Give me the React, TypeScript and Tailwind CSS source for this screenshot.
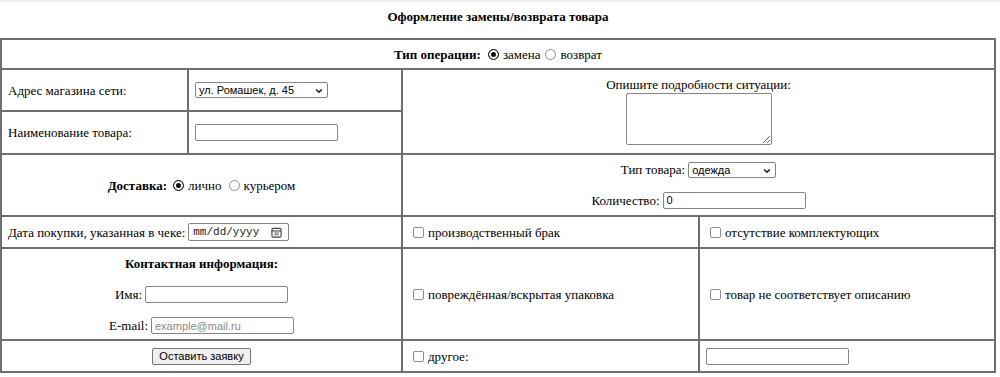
import type { ReactNode } from "react";

const serif = "font-['Liberation_Serif','Times_New_Roman',serif]";
const sans = "font-['Liberation_Sans',Arial,sans-serif]";

function Radio({ checked = false, name }: { checked?: boolean; name: string }) {
  return (
    <input
      type="radio"
      name={name}
      defaultChecked={checked}
      className="appearance-none w-[11px] h-[11px] rounded-full border border-[#8d8d8d] bg-white checked:border-[#1a1a1a] checked:bg-[#111] checked:shadow-[inset_0_0_0_2px_white] shrink-0"
    />
  );
}

function Check() {
  return (
    <input
      type="checkbox"
      className="appearance-none w-[11px] h-[11px] rounded-[2px] border border-[#8d8d8d] bg-white shrink-0"
    />
  );
}

function Select({ value, options, width }: { value: string; options: string[]; width: string }) {
  return (
    <div className={`relative ${width}`}>
      <select
        defaultValue={value}
        className={`appearance-none w-full h-[16px] pl-[3px] pr-[16px] border border-[#858585] rounded-[2px] bg-white text-[11px] leading-[14px] text-black ${sans}`}
      >
        {options.map((o) => (
          <option key={o}>{o}</option>
        ))}
      </select>
      <svg
        viewBox="0 0 10 10"
        className="absolute right-[5px] top-[5px] w-[8px] h-[8px] pointer-events-none"
      >
        <path d="M1.5 3 L5 6.5 L8.5 3" fill="none" stroke="#111" strokeWidth="1.8" />
      </svg>
    </div>
  );
}

function TextInput({ width, placeholder, value }: { width: string; placeholder?: string; value?: string }) {
  return (
    <input
      type="text"
      placeholder={placeholder}
      defaultValue={value}
      className={`${width} h-[17px] px-[3px] border border-[#858585] rounded-[2px] bg-white text-[11px] text-black placeholder:text-[#8a8a8a] ${sans}`}
    />
  );
}

function Cell({ className = "", children }: { className?: string; children?: ReactNode }) {
  return <div className={`bg-white ${className}`}>{children}</div>;
}

function CheckCell({ label }: { label: string }) {
  return (
    <Cell className="flex items-center pl-[10px] gap-[4px]">
      <Check />
      <span>{label}</span>
    </Cell>
  );
}

export default function App() {
  return (
    <div className={`w-[1000px] h-[377px] bg-white text-black text-[13px] leading-[15px] ${serif}`}>
      <div className="h-[2px] bg-[#efefef]" />
      <h3 className="w-[996px] text-center font-bold pt-[7px] h-[36px]">
        Оформление замены/возврата товара
      </h3>

      <div className="w-[996px] grid grid-cols-[185px_212px_295px_294px] grid-rows-[28px_40px_41px_60px_30px_90px_30px] gap-[2px] p-[2px] bg-[#6f6f6f]">
        {/* operation type */}
        <Cell className="col-span-4 flex items-center justify-center">
          <b>Тип операции:</b>
          <span className="ml-[7px] flex"><Radio name="op" checked /></span>
          <span className="ml-[4px]">замена</span>
          <span className="ml-[4px] flex"><Radio name="op" /></span>
          <span className="ml-[5px]">возврат</span>
        </Cell>

        <Cell className="flex items-center pl-[6px]">Адрес магазина сети:</Cell>
        <Cell className="flex items-center pl-[6px]">
          <Select value="ул. Ромашек, д. 45" options={["ул. Ромашек, д. 45", "пр. Мира, д. 12"]} width="w-[133px]" />
        </Cell>
        <Cell className="col-span-2 row-span-2 flex flex-col items-center justify-center pb-[2px]">
          <span>Опишите подробности ситуации:</span>
          <textarea className="mt-[1px] w-[146px] h-[52px] border border-[#858585] rounded-[2px] bg-white resize" />
        </Cell>

        <Cell className="flex items-center pl-[6px]">Наименование товара:</Cell>
        <Cell className="flex items-center pl-[6px]">
          <TextInput width="w-[143px]" />
        </Cell>

        {/* delivery */}
        <Cell className="col-span-2 flex items-center justify-center">
          <b>Доставка:</b>
          <span className="ml-[6px] flex"><Radio name="dl" checked /></span>
          <span className="ml-[4px]">лично</span>
          <span className="ml-[7px] flex"><Radio name="dl" /></span>
          <span className="ml-[4px]">курьером</span>
        </Cell>
        <Cell className="col-span-2 flex flex-col items-center justify-center gap-[14px]">
          <div className="flex items-center gap-[3px]">
            <span>Тип товара:</span>
            <Select value="одежда" options={["одежда", "обувь", "техника"]} width="w-[88px]" />
          </div>
          <div className="flex items-center gap-[3px]">
            <span>Количество:</span>
            <TextInput width="w-[143px]" value="0" />
          </div>
        </Cell>

        {/* purchase date */}
        <Cell className="col-span-2 flex items-center pl-[6px] gap-[3px]">
          <span>Дата покупки, указанная в чеке:</span>
          <div className="relative w-[101px] h-[18px] border border-[#858585] rounded-[2px] bg-white flex items-center pl-[4px] text-[11px] font-['Liberation_Mono','Courier_New',monospace] text-[#222]">
            mm/dd/yyyy
            <svg viewBox="0 0 12 12" className="absolute right-[6px] top-[3px] w-[11px] h-[11px]">
              <rect x="1" y="1.5" width="10" height="9.5" rx="1.5" fill="none" stroke="#444" strokeWidth="1.2" />
              <path d="M1 4.3 H11" stroke="#444" strokeWidth="1.2" />
              <path d="M3.5 6.5 H8.5 M3.5 8.5 H8.5" stroke="#444" strokeWidth="0.9" />
            </svg>
          </div>
        </Cell>
        <CheckCell label="производственный брак" />
        <CheckCell label="отсутствие комплектующих" />

        {/* contacts */}
        <Cell className="col-span-2 flex flex-col items-center pt-[7px]">
          <b>Контактная информация:</b>
          <div className="mt-[15px] flex items-center gap-[3px]">
            <span>Имя:</span>
            <TextInput width="w-[143px]" />
          </div>
          <div className="mt-[14px] flex items-center gap-[3px]">
            <span>E-mail:</span>
            <TextInput width="w-[143px]" placeholder="example@mail.ru" />
          </div>
        </Cell>
        <CheckCell label="повреждённая/вскрытая упаковка" />
        <CheckCell label="товар не соответствует описанию" />

        {/* submit */}
        <Cell className="col-span-2 flex items-center justify-center">
          <button
            type="button"
            className={`h-[17px] px-[6px] border border-[#767676] rounded-[2px] bg-[#efefef] text-[11px] leading-[13px] ${sans}`}
          >
            Оставить заявку
          </button>
        </Cell>
        <CheckCell label="другое:" />
        <Cell className="flex items-center pl-[6px]">
          <TextInput width="w-[143px]" />
        </Cell>
      </div>
    </div>
  );
}
